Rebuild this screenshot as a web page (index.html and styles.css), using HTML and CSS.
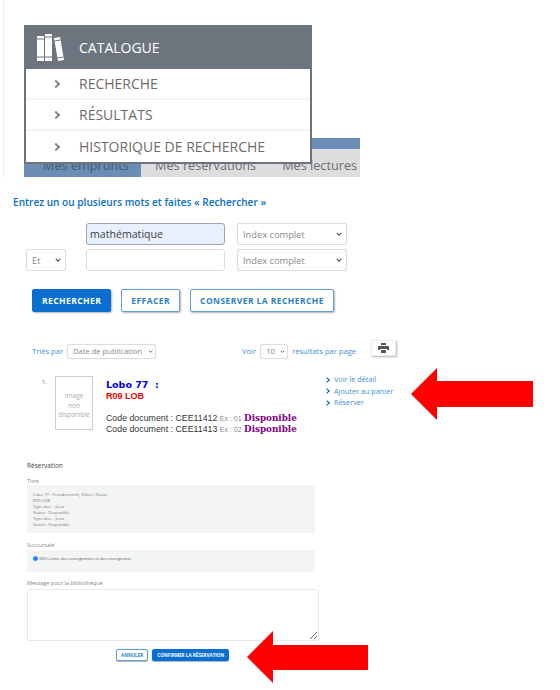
FILE: index.html
```html
<!DOCTYPE html>
<html lang="fr">
<head>
  <meta charset="UTF-8">
  <title>Catalogue</title>
  <link rel="stylesheet" href="styles.css">
</head>
<body>
<div class="hero">
  <div class="tabs">
    <div class="tab tab-on">Mes emprunts</div>
    <div class="tab">Mes réservations</div>
    <div class="tab">Mes lectures</div>
  </div>
  <div class="menu">
    <div class="menu-head">
      <svg class="books" width="28" height="28" viewBox="0 0 28 28">
        <path fill="#fff" d="M1 3h7v25H1zM9 1h7v27H9z"/>
        <path fill="#fff" d="M18 5l6-1 4 23-6 1z"/>
        <path fill="none" stroke="#6c757d" d="M1 6h7M1 24h7M9 4h7M9 24h7M18.500 8l6-1M21.500 25l6-1"/>
      </svg>
      <span>CATALOGUE</span>
    </div>
    <ul class="menu-list">
      <li><i class="chev"></i>RECHERCHE</li>
      <li><i class="chev"></i>RÉSULTATS</li>
      <li><i class="chev"></i>HISTORIQUE DE RECHERCHE</li>
    </ul>
  </div>
</div>

<p class="intro">Entrez un ou plusieurs mots et faites « Rechercher »</p>

<div class="search-form">
  <div class="search-row">
    <span class="op-cell"></span>
    <input class="term term-on" type="text" value="mathématique">
    <select class="index"><option>Index complet</option></select>
  </div>
  <div class="search-row">
    <span class="op-cell"><select class="op"><option>Et</option></select></span>
    <input class="term" type="text">
    <select class="index"><option>Index complet</option></select>
  </div>
</div>

<div class="actions">
  <button class="btn btn-main">RECHERCHER</button>
  <button class="btn">EFFACER</button>
  <button class="btn">CONSERVER LA RECHERCHE</button>
</div>

<div class="sort-bar">
  <div class="sort-left">
    <span>Triés par</span>
    <select class="mini sort-by"><option>Date de publication</option></select>
  </div>
  <div class="sort-right">
    <span>Voir</span>
    <select class="mini per-page"><option>10</option></select>
    <span>résultats par page</span>
  </div>
  <button class="print">
    <svg width="11" height="10" viewBox="0 0 11 10"><path fill="#555" d="M3 0h5v2H3zM1 3h9a1 1 0 0 1 1 1v3H9V6H2v1H0V4a1 1 0 0 1 1-1zM3 7h5v3H3z"/></svg>
  </button>
</div>

<div class="result">
  <span class="num">1.</span>
  <div class="cover">Image<br>non<br>disponible</div>
  <div class="info">
    <div class="title">Lobo 77 &nbsp;:</div>
    <div class="cote">R09 LOB</div>
    <div class="copy">Code document : CEE11412 <small>Ex : 01</small> <b>Disponible</b></div>
    <div class="copy">Code document : CEE11413 <small>Ex : 02</small> <b>Disponible</b></div>
  </div>
  <ul class="links">
    <li>Voir le détail</li>
    <li>Ajouter au panier</li>
    <li>Réserver</li>
  </ul>
</div>

<div class="resa">
  <h2>Réservation</h2>
  <label>Titre</label>
  <div class="well well-title">
    Lobo 77 : Freudenreich, Oliver. Illustr.<br>
    R09 LOB<br>
    Type doc. : Jeux<br>
    Statut : Disponible<br>
    Type doc. : Jeux<br>
    Statut : Disponible
  </div>
  <label class="label-branch">Succursale</label>
  <div class="well well-branch">
    <input type="radio" checked> 000 Centre des enseignantes et des enseignants
  </div>
  <label class="label-msg">Message pour la bibliothèque</label>
  <textarea class="msg"></textarea>
  <div class="resa-actions">
    <button class="btn btn-small">ANNULER</button>
    <button class="btn btn-small btn-main">CONFIRMER LA RÉSERVATION</button>
  </div>
</div>

<svg class="arrow arrow-top" width="122" height="52" viewBox="0 0 122 52"><path fill="#f00" d="M0 26L26 0v13h96v26H26v13z"/></svg>
<svg class="arrow arrow-bottom" width="121" height="52" viewBox="0 0 121 52"><path fill="#f00" d="M0 26L26 0v14h95v25H26v13z"/></svg>
</body>
</html>
```

FILE: styles.css
```css
*{padding: 0; margin: 0; box-sizing: border-box;}
li{list-style: none;}
body{
  position: relative;
  height: 690px;
  overflow: hidden;
  font-family: "Open Sans", sans-serif;
  background-color: #fff;
}

/* top block */
.hero{
  position: relative;
  height: 177px;
  margin-left: 3px;
  padding: 138px 0 0 20px;
  border-left: 1px solid #eee;
}
.tabs{
  display: flex;
  width: 336px;
  height: 39px;
  overflow: hidden;
  background: linear-gradient(#6a8cb5 11px, #ddd 11px);
  font-size: 12.700px;
  line-height: 18px;
  white-space: nowrap;
  color: #6d6d6d;
}
.tab{
  flex: none;
  padding: 18px 13px 0 13px;
}
.tab:nth-child(2){
  padding-left: 14px;
}
.tab-on{
  width: 117px;
  padding: 18px 0 0 19px;
  background-color: #6a8cb5;
  color: #47586e;
}
.menu{
  position: absolute;
  top: 25px;
  left: 20px;
  width: 288px;
  border: 2px solid #6c757d;
  border-top: 0;
  background-color: #fff;
}
.menu-head{
  display: flex;
  align-items: center;
  height: 44px;
  margin: 0 -2px;
  padding-left: 12px;
  background-color: #6c757d;
  color: #fff;
  font-size: 14px;
}
.books{
  margin-right: 15px;
}
.menu-list li{
  display: flex;
  align-items: center;
  height: 31px;
  border-bottom: 2px solid #f4f4f4;
  font-size: 14px;
  color: #6f6a66;
}
.menu-list li:last-child{
  border-bottom: 0;
}
.chev{
  width: 6px;
  height: 6px;
  margin: 0 20px 0 27px;
  border-top: 2px solid #888;
  border-right: 2px solid #888;
  transform: rotate(45deg);
}

.intro{
  margin: 18px 0 0 13px;
  font-size: 10.100px;
  line-height: 15px;
  font-weight: 600;
  color: #0a6fc4;
}

/* search form */
.search-form{
  margin: 13px 0 0 26px;
}
.search-row{
  display: flex;
  margin-bottom: 4px;
}
.op-cell{
  width: 60px;
}
select{
  appearance: none;
  padding-left: 5px;
  border: 1px solid #ddd;
  border-radius: 3px;
  background: #fff url("data:image/svg+xml,%3Csvg xmlns='http://www.w3.org/2000/svg' viewBox='0 0 8 5'%3E%3Cpath fill='none' stroke='%23555' stroke-width='1.500' d='M1 1l3 3 3-3'/%3E%3C/svg%3E") no-repeat right 4px center / 6px 4px;
  box-shadow: 0 0 1px rgba(0,0,0,.15);
  font-family: "Open Sans", sans-serif;
  color: #888;
}
.op{
  display: block;
  width: 40px;
  height: 22px;
  font-size: 9.300px;
}
.term{
  width: 139px;
  height: 22px;
  margin-right: 12px;
  padding-left: 3px;
  border: 1px solid #ddd;
  border-radius: 3px;
  font-family: "Open Sans", sans-serif;
  font-size: 10.600px;
  color: #444;
}
.term-on{
  border: 1px solid #9aa6b5;
  background-color: #e8f0fe;
}
.index{
  width: 110px;
  height: 22px;
  font-size: 9.300px;
}

.actions{
  display: flex;
  gap: 10px;
  margin: 18px 0 0 32px;
}
.btn{
  height: 23px;
  padding: 0 9px;
  border: 1px solid #5a9fdb;
  border-radius: 2px;
  background-color: #fff;
  box-shadow: 1px 1px 2px rgba(0,0,0,.3);
  font-family: "Open Sans", sans-serif;
  font-size: 8.500px;
  font-weight: 700;
  letter-spacing: .43px;
  color: #2c7fc6;
}
.btn-main{
  border-color: #0a6fd0;
  background-color: #0a6fd0;
  color: #fff;
}

/* sort bar */
.sort-bar{
  display: flex;
  align-items: center;
  height: 18px;
  margin: 30px 0 0 32px;
  font-size: 7.600px;
  color: #3f8fd2;
}
.sort-left, .sort-right{
  display: flex;
  align-items: center;
  gap: 4px;
}
.sort-left{
  width: 210px;
}
.mini{
  height: 15px;
  font-size: 7.600px;
  background-position: right 2px center;
  background-size: 5px 3px;
}
.sort-by{
  width: 89px;
}
.per-page{
  width: 28px;
}
.print{
  display: flex;
  align-items: center;
  justify-content: center;
  align-self: flex-start;
  width: 25px;
  height: 16px;
  margin: -2px 0 0 15px;
  border: 1px solid #eee;
  background-color: #fff;
  box-shadow: 1px 1px 2px rgba(0,0,0,.3);
}

/* result */
.result{
  display: flex;
  height: 60px;
  margin: 16px 0 0 42px;
}
.num{
  width: 13px;
  font-size: 6px;
  line-height: 12px;
  color: #666;
}
.cover{
  width: 38px;
  height: 54px;
  padding-top: 14px;
  border: 1px solid #ccc;
  font-size: 6.500px;
  line-height: 9.500px;
  text-align: center;
  color: #aaa;
}
.info{
  width: 220px;
  margin-left: 13px;
  font-family: "Liberation Sans", sans-serif;
  color: #333;
}
.title{
  height: 13px;
  margin-top: 2px;
  font-family: "DejaVu Sans", sans-serif;
  font-size: 9.500px;
  line-height: 13px;
  font-weight: 700;
  color: #0000f0;
}
.cote{
  height: 22px;
  font-size: 9px;
  line-height: 11px;
  font-weight: 700;
  color: #f00000;
}
.copy{
  font-size: 8.800px;
  line-height: 11px;
  white-space: nowrap;
}
.copy small{
  font-size: 7px;
  color: #888;
}
.copy b{
  font-family: "DejaVu Serif", serif;
  font-size: 8.800px;
  color: #800080;
}
.links{
  margin: -2px 0 0 -1px;
  font-size: 7.300px;
  line-height: 11.500px;
  color: #3f8fd2;
}
.links li{
  display: flex;
  align-items: center;
}
.links li::before{
  content: "";
  width: 3px;
  height: 3px;
  margin-right: 5px;
  border-top: 1px solid #0a5fa8;
  border-right: 1px solid #0a5fa8;
  transform: rotate(45deg);
}

/* reservation */
.resa{
  margin: 25px 0 0 27px;
  font-size: 4.300px;
  color: #777;
}
.resa h2{
  font-size: 6.500px;
  line-height: 10px;
  font-weight: 400;
  color: #444;
}
.resa label{
  display: block;
  margin-top: 6px;
  font-size: 5.500px;
  line-height: 8px;
  color: #888;
}
.well{
  width: 288px;
  padding: 6px;
  background-color: #f3f5f5;
}
.well-title{
  height: 48px;
  padding-top: 7px;
  line-height: 5.900px;
}
.well-branch{
  display: flex;
  align-items: flex-start;
  gap: 1px;
  height: 22px;
  font-size: 4.100px;
  line-height: 5px;
  color: #555;
}
.well-branch input{
  width: 5px;
  height: 5px;
}
.resa label.label-branch{
  margin-top: 8px;
  margin-bottom: 1px;
}
.resa label.label-msg{
  margin-top: 7px;
}
.msg{
  display: block;
  width: 292px;
  height: 52px;
  margin-top: 2px;
  border: 1px solid #eaeaea;
  border-radius: 2px;
}
.resa-actions{
  display: flex;
  gap: 4px;
  margin: 8px 0 0 89px;
}
.btn-small{
  height: 12px;
  padding: 0 4px;
  font-size: 4.600px;
  letter-spacing: 0;
  box-shadow: 0 1px 1px rgba(0,0,0,.3);
}

.arrow{
  position: absolute;
}
.arrow-top{
  top: 368px;
  left: 411px;
}
.arrow-bottom{
  top: 631px;
  left: 247px;
}
```
